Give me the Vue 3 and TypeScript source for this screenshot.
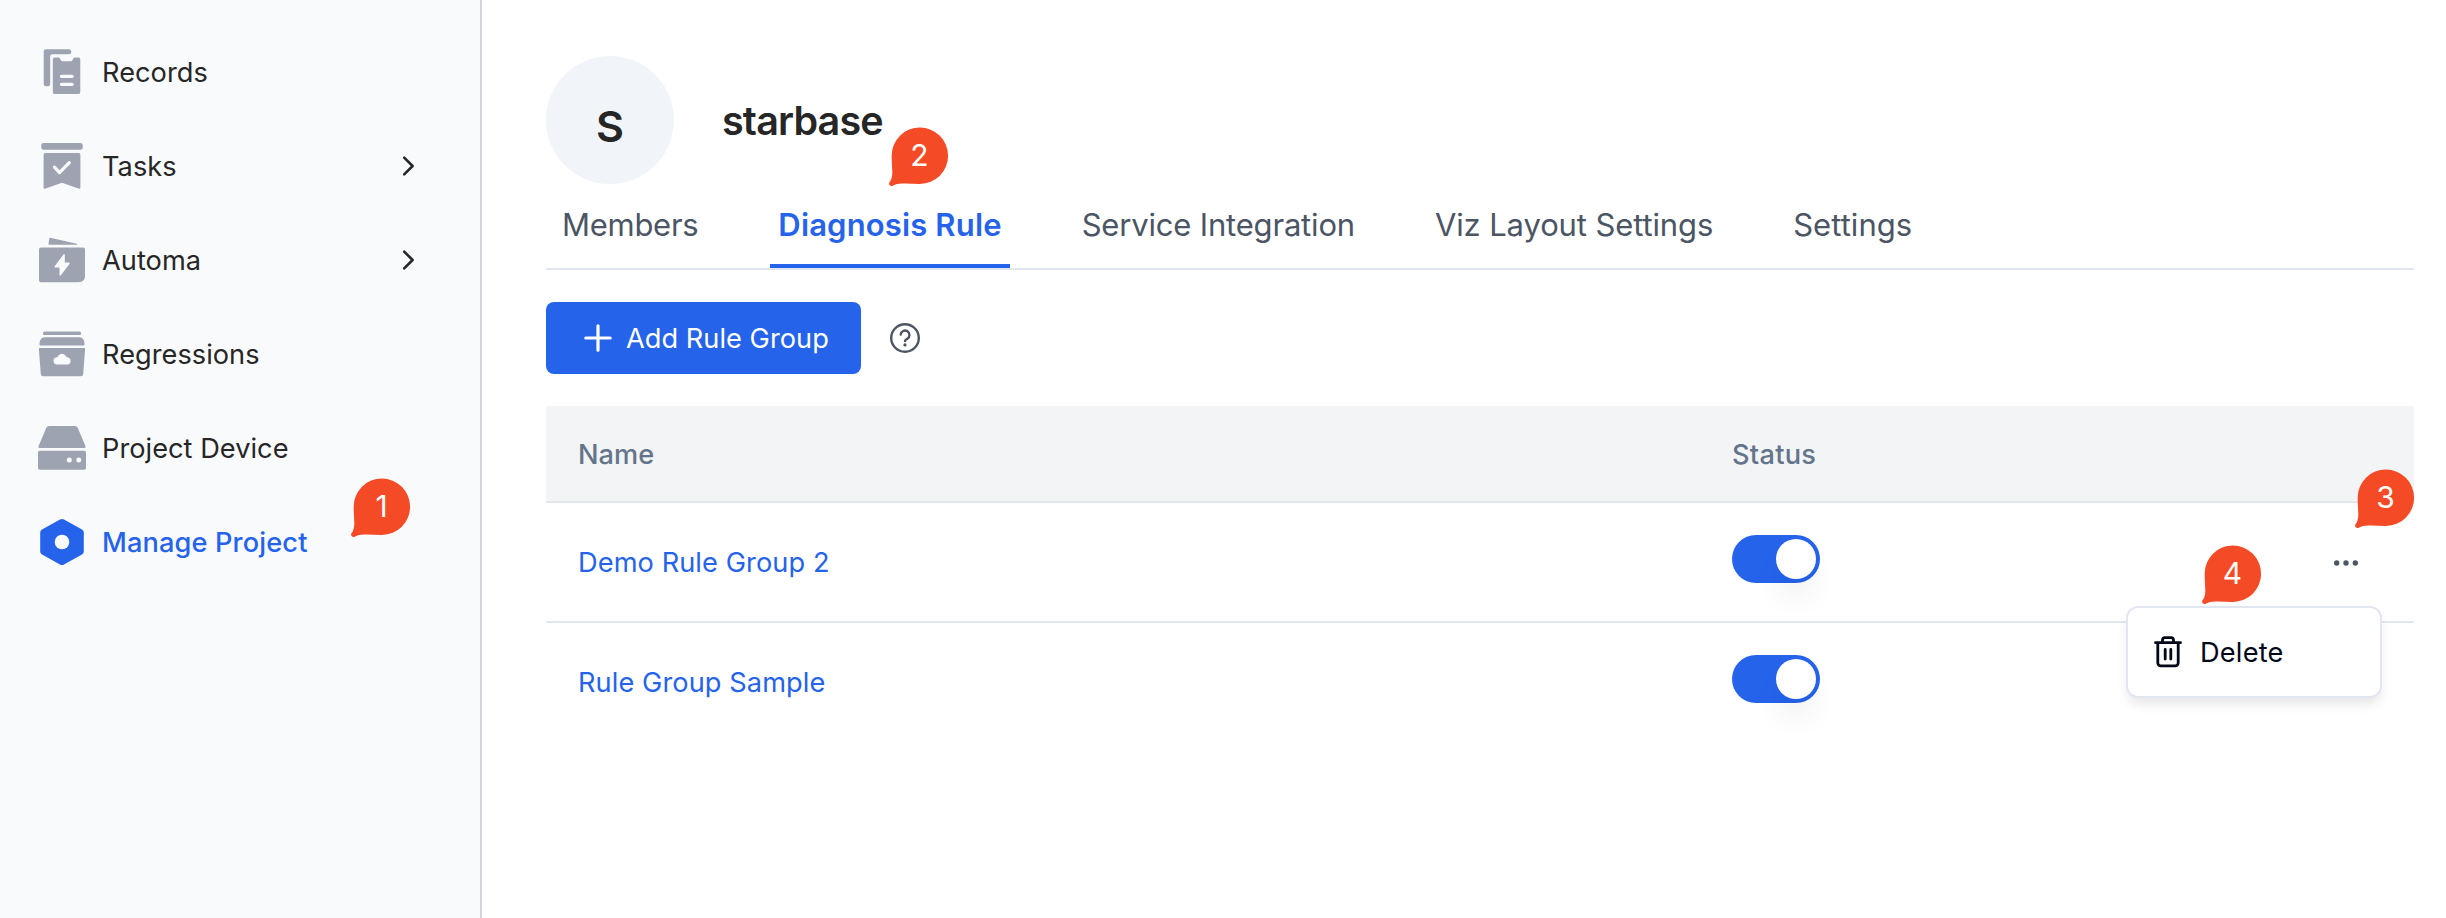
<script setup lang="ts">
interface NavItem {
  label: string
  icon: string
  expandable?: boolean
  active?: boolean
}

interface RuleGroup {
  name: string
  enabled: boolean
  menuOpen: boolean
}

const navItems: NavItem[] = [
  { label: 'Records', icon: 'records' },
  { label: 'Tasks', icon: 'tasks', expandable: true },
  { label: 'Automa', icon: 'automa', expandable: true },
  { label: 'Regressions', icon: 'regressions' },
  { label: 'Project Device', icon: 'device' },
  { label: 'Manage Project', icon: 'manage', active: true },
]

const tabs = [
  { label: 'Members', key: 'members' },
  { label: 'Diagnosis Rule', key: 'diagnosis' },
  { label: 'Service Integration', key: 'service' },
  { label: 'Viz Layout Settings', key: 'viz' },
  { label: 'Settings', key: 'settings' },
]
const activeTab = 'diagnosis'

const groups: RuleGroup[] = [
  { name: 'Demo Rule Group 2', enabled: true, menuOpen: true },
  { name: 'Rule Group Sample', enabled: true, menuOpen: false },
]

const steps = [1, 2, 3, 4]
</script>

<template>
  <div class="page">
    <aside class="sidebar">
      <nav class="nav">
        <a v-for="item in navItems" :key="item.label" class="nav-item" :class="{ active: item.active }">
          <svg class="nav-icon" viewBox="0 0 48 48" fill="currentColor">
            <template v-if="item.icon === 'records'">
              <path d="M7.700 1.300h23.100a2.300 2.300 0 0 1 0 5H14a1.800 1.800 0 0 0-1.800 1.800v27.900a2.300 2.300 0 0 1-2.300 2.300H8a2.300 2.300 0 0 1-2.300-2.300V3.300a2 2 0 0 1 2-2z" />
              <path d="M17 9.500h3.800c1.600 0 1.300 3.800 4.200 3.800h7.300c2.900 0 2.600-3.800 4.200-3.800h3.600a2 2 0 0 1 2.200 2v32.400a2.200 2.200 0 0 1-2.200 2.200H17a2.200 2.200 0 0 1-2.200-2.200V11.500a2 2 0 0 1 2.200-2z" />
              <path class="cut-line" d="M23.400 28.300h10.800M23.400 36.300h10.800" />
            </template>
            <template v-else-if="item.icon === 'tasks'">
              <rect x="3.300" y="1" width="41.400" height="6.800" rx="2.300" />
              <path d="M7.300 11h33.400a1.700 1.700 0 0 1 1.700 1.700v32.500c0 1.300-.9 1.800-2 1.400L24 40.800 7.600 46.600c-1.100.4-2-.1-2-1.400V12.700A1.700 1.700 0 0 1 7.300 11z" />
              <path class="cut-line" d="M16.500 25.200l5 5.400 9.800-10" />
            </template>
            <template v-else-if="item.icon === 'automa'">
              <path d="M12.300 1.800l26.400 6c.9.200.8.900 0 .9H11.500c-.7 0-1.100-.3-1-1l.8-5.200c.1-.6.400-.8 1-.7z" />
              <path d="M3 11.500h42a2 2 0 0 1 2 2V40c0 4-2.500 6.200-6.500 6.200H3a2 2 0 0 1-2-2V13.500a2 2 0 0 1 2-2z" />
              <path class="cut-fill" d="M25.500 18.500L16.600 30.200c-.4.700-.2 1.200.6 1.200h4.300v7.400c0 1 .8 1.200 1.400.4l8.700-11.500c.5-.8.200-1.200-.6-1.200h-4.200v-7.400c0-1.100-.6-1.300-1.300-.6z" />
            </template>
            <template v-else-if="item.icon === 'regressions'">
              <rect x="5" y="1.500" width="38" height="3.600" rx="1.500" />
              <path d="M6.500 7.300h35c3 0 5 2.800 5 7 0 .8-.5 1.200-1.200 1.200H2.700c-.7 0-1.200-.4-1.200-1.200 0-4.200 2-7 5-7z" />
              <path d="M2 18h44c.8 0 1.200.5 1.100 1.200L45.200 44a2.400 2.400 0 0 1-2.400 2.200H5.200A2.400 2.400 0 0 1 2.800 44L.9 19.200C.8 18.500 1.200 18 2 18z" />
              <path class="cut-fill" d="M18.800 34.500a3.700 3.700 0 0 1-.3-7.300c1 0 1.300-1 2-1.800a4.700 4.700 0 0 1 7 0c.8.900 1 1.800 2 1.800a3.700 3.700 0 0 1-.1 7.300z" />
            </template>
            <template v-else-if="item.icon === 'device'">
              <path d="M11.200 2h25.600c1.500 0 2.400.8 3 2l7.700 18.300c.4 1-.1 1.600-1.100 1.600H1.600c-1 0-1.500-.6-1.100-1.600L8.200 4c.6-1.200 1.500-2 3-2z" />
              <rect x="0" y="26.700" width="48" height="19" rx="1.800" />
              <circle class="cut-fill" cx="31.300" cy="36" r="2.500" />
              <circle class="cut-fill" cx="40.800" cy="36" r="2.500" />
            </template>
            <template v-else>
              <path d="M22 1.600a4 4 0 0 1 4 0l18 9.900a3.500 3.500 0 0 1 1.800 3v19a3.500 3.500 0 0 1-1.800 3L26 46.500a4 4 0 0 1-4 0L4 36.500a3.500 3.500 0 0 1-1.800-3v-19a3.500 3.500 0 0 1 1.800-3z" />
              <circle class="cut-fill" cx="24" cy="24" r="7.300" />
            </template>
          </svg>
          <span class="nav-label">{{ item.label }}</span>
          <svg v-if="item.expandable" class="chevron" viewBox="0 0 12 20">
            <path d="M1.200 1.600l8.400 8.400-8.400 8.400" />
          </svg>
        </a>
      </nav>
    </aside>

    <main class="content">
      <header class="project">
        <div class="avatar">S</div>
        <h1 class="project-name">starbase</h1>
      </header>

      <div class="tabs">
        <a v-for="tab in tabs" :key="tab.key" class="tab" :class="[tab.key, { active: tab.key === activeTab }]">{{ tab.label }}</a>
      </div>

      <div class="toolbar">
        <button class="add-button" type="button">
          <svg class="plus" viewBox="0 0 28 28"><path d="M14 1.800v24.400M1.800 14h24.400" /></svg>
          <span>Add Rule Group</span>
        </button>
        <svg class="help" viewBox="0 0 32 32">
          <circle cx="16" cy="16" r="13.800" />
          <path d="M11.700 12.500a4.400 4.400 0 1 1 6.700 4.200c-1.500.9-2.400 1.300-2.400 2.300" />
          <circle class="dot" cx="16" cy="22.900" r="1.600" />
        </svg>
      </div>

      <section class="table">
        <div class="row head">
          <span>Name</span>
          <span class="status-title">Status</span>
          <span></span>
        </div>
        <div v-for="group in groups" :key="group.name" class="row">
          <a class="group-name">{{ group.name }}</a>
          <span class="switch" :class="{ on: group.enabled }"><span class="knob"></span></span>
          <svg v-if="group.menuOpen" class="more" viewBox="0 0 24 6" fill="currentColor">
            <circle cx="2.700" cy="3" r="2.700" />
            <circle cx="12" cy="3" r="2.700" />
            <circle cx="21.300" cy="3" r="2.700" />
          </svg>
          <div v-if="group.menuOpen" class="menu">
            <svg class="trash" viewBox="0 0 28 32">
              <path d="M1.500 6.700h25M8.500 6.500V4.200A2.500 2.500 0 0 1 11 1.700h6a2.500 2.500 0 0 1 2.500 2.500v2.300M3.800 7v20a2.800 2.800 0 0 0 2.800 2.800h14.800a2.800 2.800 0 0 0 2.800-2.800V7M11.200 13.500v9.500M16.800 13.500v9.500" />
            </svg>
            <span>Delete</span>
          </div>
        </div>
      </section>
    </main>

    <div v-for="step in steps" :key="step" class="step" :class="'step-' + step">
      <svg class="step-shape" viewBox="0 0 60 60">
        <path d="M30.900.5a28.100 28.100 0 0 1 0 56.400C22 57 12 55.300 4.500 58.200 2 60.400-.6 58 .3 55.500 2.600 53 3.700 48 3.200 43 3 38 2.600 33 2.700 28.500A28.100 28.100 0 0 1 30.900.5z" />
      </svg>
      <span class="step-number">{{ step }}</span>
    </div>
  </div>
</template>

<style>
html,
body {
  margin: 0;
  background: #fff;
  overflow: hidden;
}
</style>

<style scoped>
.page {
  position: relative;
  display: flex;
  width: 2446px;
  height: 918px;
  overflow: hidden;
  background: #fff;
  color: #262626;
  font-family: Inter, "Liberation Sans", sans-serif;
  font-size: 27.200px;
}
.sidebar {
  box-sizing: border-box;
  flex: none;
  width: 482px;
  border-right: 2px solid #d1d5de;
  background: #f9fafc;
}
.nav {
  padding: 25px 65px 0 38px;
}
.nav-item {
  display: flex;
  align-items: center;
  height: 94px;
}
.nav-icon {
  flex: none;
  width: 48px;
  height: 48px;
  color: #9da3b1;
}
.nav-label {
  flex: 1;
  margin-left: 16px;
  letter-spacing: 0.030px;
}
.nav-item.active .nav-icon,
.nav-item.active .nav-label {
  color: #2563eb;
}
.nav-item.active .nav-label {
  font-weight: 500;
  letter-spacing: 0.130px;
}
.cut-fill {
  fill: #f9fafc;
}
.cut-line {
  fill: none;
  stroke: #f9fafc;
  stroke-width: 3.200;
  stroke-linecap: round;
  stroke-linejoin: round;
}
.chevron {
  width: 12px;
  height: 20px;
  fill: none;
  stroke: #262626;
  stroke-width: 2.600;
  stroke-linecap: round;
  stroke-linejoin: round;
}
.content {
  flex: 1;
  padding: 56px 32px 0 64px;
}
.project {
  display: flex;
  align-items: center;
  gap: 48px;
  height: 128px;
}
.avatar {
  box-sizing: border-box;
  width: 128px;
  height: 128px;
  padding-top: 12px;
  border-radius: 50%;
  background: #f1f5fa;
  font-size: 43px;
  font-weight: 600;
  line-height: 116px;
  text-align: center;
}
.project-name {
  margin: 0;
  padding-top: 1px;
  font-size: 39.500px;
  font-weight: 600;
  line-height: 48px;
  letter-spacing: -0.850px;
}
.tabs {
  display: flex;
  gap: 64px;
  height: 84px;
  border-bottom: 2px solid #e2e6f1;
  color: #4b5563;
  font-size: 31px;
}
.tab {
  box-sizing: border-box;
  height: 84px;
  padding: 0 8px;
  border-bottom: 4px solid transparent;
  line-height: 81px;
  white-space: nowrap;
}
.tab.members {
  padding-left: 16px;
  letter-spacing: -0.280px;
}
.tab.diagnosis {
  letter-spacing: 0.150px;
}
.tab.service {
  letter-spacing: -0.180px;
}
.tab.viz {
  letter-spacing: -0.120px;
}
.tab.settings {
  letter-spacing: 0.050px;
}
.tab.active {
  border-bottom-color: #2563eb;
  color: #2563eb;
  font-weight: 600;
}
.toolbar {
  display: flex;
  align-items: center;
  gap: 28px;
  height: 72px;
  margin-top: 32px;
}
.add-button {
  display: flex;
  align-items: center;
  width: 315px;
  height: 72px;
  padding: 0 0 0 38px;
  border: 0;
  border-radius: 8px;
  background: #2563eb;
  color: #fff;
  font-family: inherit;
  font-size: 27.200px;
  letter-spacing: 0.030px;
  white-space: nowrap;
}
.plus {
  flex: none;
  width: 28px;
  height: 28px;
  margin-right: 14px;
  fill: none;
  stroke: #fff;
  stroke-width: 3.200;
  stroke-linecap: round;
}
.help {
  width: 32px;
  height: 32px;
  fill: none;
  stroke: #4b5563;
  stroke-width: 2.400;
  stroke-linecap: round;
}
.help .dot {
  fill: #4b5563;
  stroke: none;
}
.table {
  margin-top: 32px;
}
.row {
  position: relative;
  box-sizing: border-box;
  display: grid;
  grid-template-columns: 1154px 1fr 88px;
  align-items: center;
  height: 120px;
  padding-left: 32px;
  border-bottom: 2px solid #e2e6f1;
}
.row:last-child {
  border-bottom-color: transparent;
}
.row.head {
  height: 97px;
  padding-top: 1px;
  background: #f3f4f6;
  color: #64748b;
  font-weight: 500;
}
.status-title {
  letter-spacing: 0.250px;
}
.group-name {
  color: #2563eb;
  letter-spacing: 0.080px;
}
.switch {
  box-sizing: border-box;
  display: flex;
  width: 88px;
  height: 48px;
  margin-bottom: 6px;
  padding: 4px;
  border-radius: 24px;
  background: #d1d5db;
}
.switch.on {
  justify-content: flex-end;
  background: #2563eb;
}
.knob {
  width: 40px;
  height: 40px;
  border-radius: 50%;
  background: #fff;
  box-shadow: 0 20px 30px -6px rgba(0, 0, 0, 0.1);
}
.more {
  width: 24px;
  height: 6px;
  margin-top: 1px;
  margin-left: 8px;
  color: #4b5563;
}
.menu {
  position: absolute;
  z-index: 2;
  top: 103px;
  right: 32px;
  box-sizing: border-box;
  display: flex;
  align-items: center;
  width: 256px;
  height: 92px;
  padding-left: 26px;
  border: 2px solid #e2e6f1;
  border-radius: 12px;
  background: #fff;
  box-shadow: 0 8px 12px -2px rgba(0, 0, 0, 0.1);
  color: #020817;
  letter-spacing: 0.200px;
}
.trash {
  width: 28px;
  height: 32px;
  margin-right: 18px;
  fill: none;
  stroke: #020817;
  stroke-width: 2.800;
  stroke-linecap: round;
  stroke-linejoin: round;
}
.step {
  position: absolute;
  z-index: 3;
  width: 60px;
  height: 60px;
}
.step-shape {
  display: block;
  width: 60px;
  height: 60px;
  fill: #f54a26;
}
.step-number {
  position: absolute;
  top: 0;
  left: 2px;
  width: 57px;
  color: #fff;
  font-size: 30px;
  line-height: 57px;
  text-align: center;
}
.step-1 {
  top: 478px;
  left: 351px;
}
.step-2 {
  top: 127px;
  left: 889px;
}
.step-3 {
  top: 469px;
  left: 2355px;
}
.step-4 {
  top: 545px;
  left: 2202px;
}
</style>
